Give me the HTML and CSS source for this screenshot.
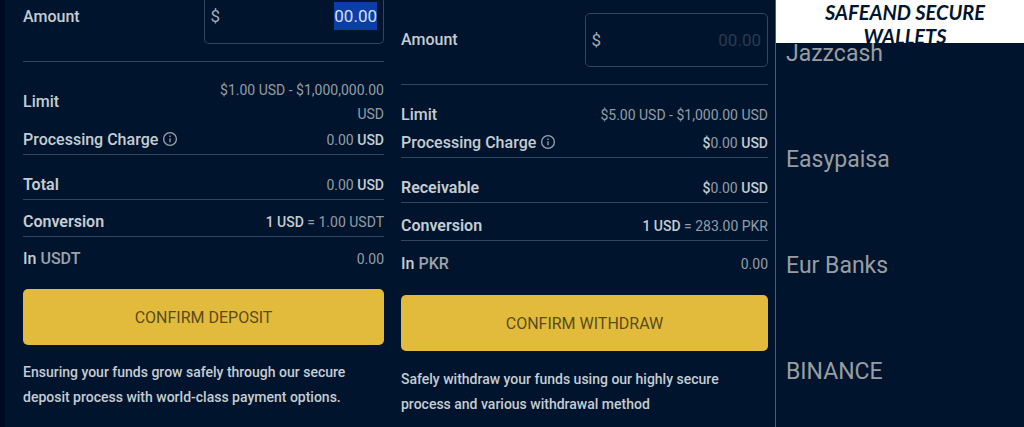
FILE: index.html
```html
<!DOCTYPE html>
<html lang="en">
<head>
  <meta charset="UTF-8" />
  <meta name="viewport" content="width=device-width, initial-scale=1.0" />
  <title>Deposit and Withdraw</title>
  <link rel="stylesheet" href="styles.css">
</head>
<body>
  <main class="page">
    <form class="panel deposit">
      <div class="row amount">
        <label for="deposit-amount">Amount</label>
        <div class="field">
          <span>$</span>
          <input type="text" id="deposit-amount" value="00.00" inputmode="decimal" autocomplete="off" />
        </div>
      </div>
      <div class="row spaced">
        <span class="name">Limit</span>
        <span class="value limit">$1.00 USD - $1,000,000.00 USD</span>
      </div>
      <div class="row line">
        <span class="name">Processing Charge
          <svg class="info" viewBox="0 0 16 16" aria-hidden="true"><circle cx="8" cy="8" r="6.4" /><path d="M8 7.2v4M8 4.6v1.4" /></svg>
        </span>
        <span class="value">0.00 <b>USD</b></span>
      </div>
      <div class="row line spaced">
        <span class="name">Total</span>
        <span class="value">0.00 <b>USD</b></span>
      </div>
      <div class="row line rate">
        <span class="name">Conversion</span>
        <span class="value"><b>1 USD</b> = 1.00 USDT</span>
      </div>
      <div class="row rate">
        <span class="name">In <span class="currency">USDT</span></span>
        <span class="value">0.00</span>
      </div>
      <button type="button">CONFIRM DEPOSIT</button>
      <p>Ensuring your funds grow safely through our secure deposit process with world-class payment options.</p>
    </form>

    <form class="panel withdraw">
      <div class="row amount">
        <label for="withdraw-amount">Amount</label>
        <div class="field">
          <span>$</span>
          <input type="text" id="withdraw-amount" placeholder="00.00" inputmode="decimal" autocomplete="off" />
        </div>
      </div>
      <div class="row spaced">
        <span class="name">Limit</span>
        <span class="value">$5.00 USD - $1,000.00 USD</span>
      </div>
      <div class="row line">
        <span class="name">Processing Charge
          <svg class="info" viewBox="0 0 16 16" aria-hidden="true"><circle cx="8" cy="8" r="6.4" /><path d="M8 7.2v4M8 4.6v1.4" /></svg>
        </span>
        <span class="value"><b>$</b>0.00 <b>USD</b></span>
      </div>
      <div class="row line spaced">
        <span class="name">Receivable</span>
        <span class="value"><b>$</b>0.00 <b>USD</b></span>
      </div>
      <div class="row line rate">
        <span class="name">Conversion</span>
        <span class="value"><b>1 USD</b> = 283.00 PKR</span>
      </div>
      <div class="row rate">
        <span class="name">In <span class="currency">PKR</span></span>
        <span class="value">0.00</span>
      </div>
      <button type="button">CONFIRM WITHDRAW</button>
      <p>Safely withdraw your funds using our highly secure process and various withdrawal method</p>
    </form>

    <section class="wallets">
      <h2>SAFEAND SECURE WALLETS</h2>
      <ul>
        <li>Jazzcash</li>
        <li>Easypaisa</li>
        <li>Eur Banks</li>
        <li>BINANCE</li>
      </ul>
    </section>
  </main>

  <script>
    const depositAmount = document.getElementById('deposit-amount');
    depositAmount.focus();
    depositAmount.select();
  </script>
</body>
</html>
```
FILE: styles.css
```css
* {
  box-sizing: border-box;
}
body {
  margin: 0;
  background-color: #00152d;
  color: #c5ccd3;
  font-family: Roboto, sans-serif;
  font-size: 16px;
}
.page {
  display: grid;
  grid-template-columns: 392fr 384fr 248fr;
  min-height: 100vh;
}
.deposit {
  padding: 0 8px 0 18px;
  border-left: 5px solid #000a20;
}
.withdraw {
  padding: 13px 7px 0 9px;
  border-right: 1px solid #4d5b6c;
}
.row {
  display: flex;
  justify-content: space-between;
  align-items: center;
  line-height: 28px;
}
.line {
  border-bottom: 1px solid #34465a;
}
.spaced {
  padding-top: 16px;
}
.rate {
  padding-top: 8px;
}
.withdraw .rate {
  padding-top: 9px;
}
.amount {
  padding-bottom: 17px;
  border-bottom: 1px solid #34465a;
}
.name,
.amount label {
  font-size: 16px;
  font-weight: 500;
}
.line.spaced .name,
.line.rate .name {
  font-weight: 600;
}
.rate .currency {
  color: #9ba3ac;
}
.value {
  color: #949ca5;
  font-size: 14px;
  text-align: right;
}
.value b {
  color: #c5ccd3;
  font-weight: 500;
}
.limit {
  width: 50%;
  line-height: 24px;
}
.info {
  width: 16px;
  height: 16px;
  vertical-align: -2px;
  fill: none;
  stroke: #9ba3ac;
  stroke-width: 1.3;
}
.field {
  display: flex;
  align-items: center;
  width: 50%;
  height: 54px;
  padding: 0 6px;
  border: 1px solid #34465a;
  border-radius: 5px;
  font-size: 17px;
}
.deposit .field {
  height: 44px;
  padding-bottom: 11px;
  border-top: 0;
  border-radius: 0 0 5px 5px;
}
.deposit .amount label {
  padding-bottom: 11px;
}
.field span {
  color: #a4acb4;
}
.field input {
  flex: 1;
  min-width: 0;
  padding: 0;
  border: 0;
  outline: none;
  background: none;
  color: #c5ccd3;
  font: inherit;
  text-align: right;
}
.field input::placeholder {
  color: #2b3a4d;
}
.field input::selection {
  background-color: #0b3fa5;
  color: #d5e0f0;
}
button {
  display: block;
  width: 100%;
  height: 56px;
  margin-top: 16px;
  border: 0;
  border-radius: 5px;
  background-color: #e2bb3d;
  color: #5a4b1d;
  font: 16px Roboto, sans-serif;
  cursor: pointer;
}
.withdraw button {
  margin-top: 17px;
}
p {
  margin: 15px 0 0;
  font-size: 14px;
  font-weight: 500;
  line-height: 25px;
}
.withdraw p {
  margin-top: 16px;
}
.wallets h2 {
  height: 43px;
  margin: 0;
  padding: 0 24px 0 34px;
  background-color: #fff;
  color: #00152d;
  font: italic bold 20px/24px Lato, sans-serif;
  text-align: center;
}
.wallets ul {
  display: grid;
  gap: 84px;
  margin: 0;
  padding: 0 10px;
  list-style: none;
}
.wallets li {
  color: #999da2;
  font-size: 23px;
  line-height: 22px;
}
```
